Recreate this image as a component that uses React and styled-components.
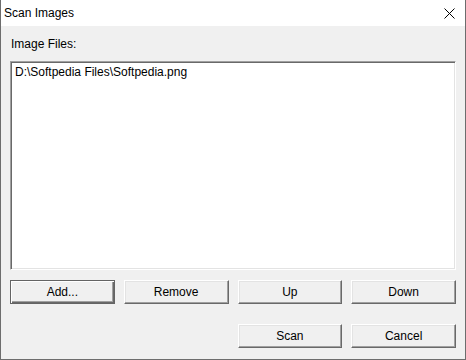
import React from 'react';
import styled, { createGlobalStyle } from 'styled-components';

const GlobalStyle = createGlobalStyle`
    html, body {
        margin: 0;
        padding: 0;
        background: #f0f0f0;
    }
    * {
        box-sizing: border-box;
    }
`;

const Window = styled.div`
    width: 466px;
    height: 360px;
    display: flex;
    flex-direction: column;
    background: #f0f0f0;
    border: 1px solid #6d6d6d;
    border-top: none;
    font-family: "Liberation Sans", Arial, sans-serif;
    font-size: 12px;
    color: #000;
    overflow: hidden;
`;

const TitleBar = styled.div`
    height: 26px;
    flex: none;
    display: flex;
    align-items: center;
    justify-content: space-between;
    background: #fff;
    padding: 0 10px 1px 3px;
    font-size: 12px;
`;

const CloseIcon = styled.svg`
    width: 11px;
    height: 11px;
    margin-top: 1px;
`;

const Body = styled.div`
    flex: 1;
    display: flex;
    flex-direction: column;
    padding: 9px 9px 0 9px;
`;

const Label = styled.div`
    height: 26px;
    padding: 1px 0 0 1px;
    line-height: 16px;
`;

const ListBox = styled.div`
    height: 209px;
    background: #fff;
    border: 1px solid;
    border-color: #a0a0a0 #fff #fff #a0a0a0;
    box-shadow: inset 1px 1px #696969, inset -1px -1px #e3e3e3;
    padding: 3px 4px;
    line-height: 14px;
`;

const ButtonGrid = styled.div`
    display: grid;
    grid-template-columns: repeat(4, 1fr);
    column-gap: 9px;
    margin-top: ${p => p.$top}px;
`;

const Button = styled.button`
    height: 24px;
    font-family: inherit;
    font-size: 12px;
    color: #000;
    background: #f0f0f0;
    padding: 0 0 1px 0;
    border: 1px solid;
    border-color: #fff #696969 #696969 #fff;
    box-shadow: inset -1px -1px #a0a0a0, inset 1px 1px #e3e3e3;
    outline: none;
    grid-column: ${p => p.$col || 'auto'};
    ${p => p.$default && `
        border-color: #646464;
        box-shadow: inset 1px 1px #fff, inset -1px -1px #696969, inset -2px -2px #a0a0a0;
    `}
`;

export default function App() {
    return (
        <>
            <GlobalStyle />
            <Window>
                <TitleBar>
                    <span>Scan Images</span>
                    <CloseIcon viewBox="0 0 11 11">
                        <path d="M0.5 0.5 L10.5 10.5 M10.5 0.5 L0.5 10.5" stroke="#000" strokeWidth="1" fill="none" />
                    </CloseIcon>
                </TitleBar>
                <Body>
                    <Label>Image Files:</Label>
                    <ListBox>D:\Softpedia Files\Softpedia.png</ListBox>
                    <ButtonGrid $top={10}>
                        <Button $default>Add...</Button>
                        <Button>Remove</Button>
                        <Button>Up</Button>
                        <Button>Down</Button>
                    </ButtonGrid>
                    <ButtonGrid $top={20}>
                        <Button $col={3}>Scan</Button>
                        <Button $col={4}>Cancel</Button>
                    </ButtonGrid>
                </Body>
            </Window>
        </>
    );
}
